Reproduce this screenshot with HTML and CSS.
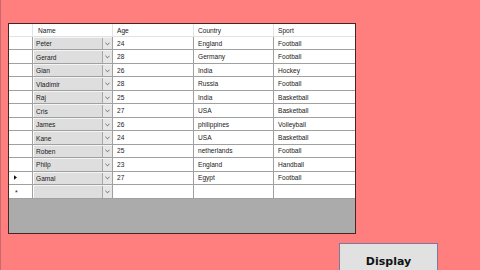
FILE: index.html
```html
<!DOCTYPE html>
<html>
<head>
<meta charset="utf-8">
<link rel="stylesheet" href="styles.css">
</head>
<body>
<div class="form">
  <div class="edge"></div>
  <div class="content">
    <div class="grid">
      <div class="row head">
        <div class="rh"></div>
        <div class="c name">Name</div>
        <div class="c">Age</div>
        <div class="c">Country</div>
        <div class="c last">Sport</div>
      </div>
      <div class="row"><div class="rh"></div><div class="c name"><div class="combo"><span class="val">Peter</span><span class="btn"><svg viewBox="0 0 6 4"><path d="M0.5 0.5 L3 3 L5.5 0.5"/></svg></span></div></div><div class="c">24</div><div class="c">England</div><div class="c last">Football</div></div>
      <div class="row"><div class="rh"></div><div class="c name"><div class="combo"><span class="val">Gerard</span><span class="btn"><svg viewBox="0 0 6 4"><path d="M0.5 0.5 L3 3 L5.5 0.5"/></svg></span></div></div><div class="c">28</div><div class="c">Germany</div><div class="c last">Football</div></div>
      <div class="row"><div class="rh"></div><div class="c name"><div class="combo"><span class="val">Gian</span><span class="btn"><svg viewBox="0 0 6 4"><path d="M0.5 0.5 L3 3 L5.5 0.5"/></svg></span></div></div><div class="c">26</div><div class="c">India</div><div class="c last">Hockey</div></div>
      <div class="row"><div class="rh"></div><div class="c name"><div class="combo"><span class="val">Vladimir</span><span class="btn"><svg viewBox="0 0 6 4"><path d="M0.5 0.5 L3 3 L5.5 0.5"/></svg></span></div></div><div class="c">28</div><div class="c">Russia</div><div class="c last">Football</div></div>
      <div class="row"><div class="rh"></div><div class="c name"><div class="combo"><span class="val">Raj</span><span class="btn"><svg viewBox="0 0 6 4"><path d="M0.5 0.5 L3 3 L5.5 0.5"/></svg></span></div></div><div class="c">25</div><div class="c">India</div><div class="c last">Basketball</div></div>
      <div class="row"><div class="rh"></div><div class="c name"><div class="combo"><span class="val">Cris</span><span class="btn"><svg viewBox="0 0 6 4"><path d="M0.5 0.5 L3 3 L5.5 0.5"/></svg></span></div></div><div class="c">27</div><div class="c">USA</div><div class="c last">Basketball</div></div>
      <div class="row"><div class="rh"></div><div class="c name"><div class="combo"><span class="val">James</span><span class="btn"><svg viewBox="0 0 6 4"><path d="M0.5 0.5 L3 3 L5.5 0.5"/></svg></span></div></div><div class="c">26</div><div class="c">philippines</div><div class="c last">Volleyball</div></div>
      <div class="row"><div class="rh"></div><div class="c name"><div class="combo"><span class="val">Kane</span><span class="btn"><svg viewBox="0 0 6 4"><path d="M0.5 0.5 L3 3 L5.5 0.5"/></svg></span></div></div><div class="c">24</div><div class="c">USA</div><div class="c last">Basketball</div></div>
      <div class="row"><div class="rh"></div><div class="c name"><div class="combo"><span class="val">Roben</span><span class="btn"><svg viewBox="0 0 6 4"><path d="M0.5 0.5 L3 3 L5.5 0.5"/></svg></span></div></div><div class="c">25</div><div class="c">netherlands</div><div class="c last">Football</div></div>
      <div class="row"><div class="rh"></div><div class="c name"><div class="combo"><span class="val">Philp</span><span class="btn"><svg viewBox="0 0 6 4"><path d="M0.5 0.5 L3 3 L5.5 0.5"/></svg></span></div></div><div class="c">23</div><div class="c">England</div><div class="c last">Handball</div></div>
      <div class="row"><div class="rh"><svg class="arrow" viewBox="0 0 4 6"><path d="M0 0 L4 3 L0 6 Z"/></svg></div><div class="c name"><div class="combo"><span class="val">Gamal</span><span class="btn"><svg viewBox="0 0 6 4"><path d="M0.5 0.5 L3 3 L5.5 0.5"/></svg></span></div></div><div class="c">27</div><div class="c">Egypt</div><div class="c last">Football</div></div>
      <div class="row"><div class="rh"><span class="star">*</span></div><div class="c name"><div class="combo"><span class="val"></span><span class="btn"><svg viewBox="0 0 6 4"><path d="M0.5 0.5 L3 3 L5.5 0.5"/></svg></span></div></div><div class="c"></div><div class="c"></div><div class="c last"></div></div>
      <div class="empty"></div>
    </div>
    <button class="display">Display</button>
  </div>
</div>
</body>
</html>
```
FILE: styles.css
```css
html, body {
  margin: 0;
  padding: 0;
  width: 480px;
  height: 270px;
  overflow: hidden;
  background: #ff7f7f;
}
.form {
  display: flex;
  height: 270px;
}
.edge {
  width: 1px;
  background: #c86a6a;
  flex: none;
}
.content {
  padding: 23px 0 0 7px;
  display: flex;
  flex-direction: column;
}
.grid {
  flex: none;
  width: 348px;
  height: 211px;
  box-sizing: border-box;
  border: 1px solid #4a2424;
  background: #ababab;
  display: flex;
  flex-direction: column;
  font-family: "Liberation Sans", Arial, sans-serif;
  font-size: 6.6px;
  color: #1a1a1a;
}
.row {
  display: flex;
  height: 13.47px;
  box-sizing: border-box;
  border-bottom: 1px solid #a0a0a0;
  background: #fff;
  flex: none;
}
.row.head {
  height: 13px;
  border-bottom: 1px solid #e3e3e3;
}
.rh {
  width: 24px;
  flex: none;
  box-sizing: border-box;
  border-right: 1px solid #a0a0a0;
  display: flex;
  align-items: center;
  padding-left: 4px;
}
.head .rh, .head .c {
  border-right-color: #e3e3e3;
}
.c {
  width: 81px;
  flex: none;
  box-sizing: border-box;
  border-right: 1px solid #a0a0a0;
  padding-left: 4px;
  display: flex;
  align-items: center;
  white-space: nowrap;
  overflow: hidden;
}
.c.name {
  width: 80px;
  padding: 0 0 0 1px;
}
.head .c.name {
  padding-left: 5px;
}
.c.name + .c + .c {
  width: 80px;
}
.c.last {
  border-right: none;
}
.combo {
  flex: 1;
  height: 100%;
  box-sizing: border-box;
  border-top: 1px solid #f4f4f4;
  display: flex;
  background: #dedede;
}
.val {
  flex: 1;
  padding-left: 2px;
  display: flex;
  align-items: center;
}
.btn {
  width: 10px;
  box-sizing: border-box;
  border-left: 1px solid #a8a8a8;
  display: flex;
  align-items: center;
  justify-content: center;
  background: #e6e6e6;
}
.btn svg {
  width: 5px;
  height: 4px;
  fill: none;
  stroke: #333;
  stroke-width: 0.8;
}
.arrow {
  width: 3px;
  height: 5px;
  fill: #111;
  margin-left: 1px;
}
.star {
  font-size: 7px;
  margin-left: 2px;
  line-height: 1;
  padding-top: 2px;
}
.empty {
  flex: 1;
  background: #ababab;
}
.display {
  flex: none;
  margin: 9px 0 0 331px;
  width: 99px;
  height: 36px;
  box-sizing: border-box;
  border: 1px solid #7a7a9e;
  background: #e1e1e1;
  font-family: "DejaVu Sans", Verdana, sans-serif;
  font-weight: bold;
  font-size: 11px;
  color: #111;
  padding: 0;
  text-align: center;
}
```
